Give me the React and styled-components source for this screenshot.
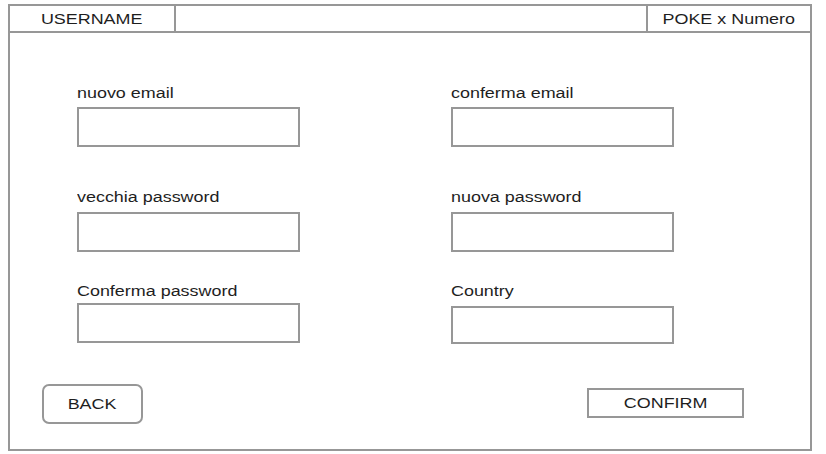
import React from "react";
import styled, { createGlobalStyle } from "styled-components";

const Global = createGlobalStyle`
  html, body { margin: 0; padding: 0; background: #ffffff; }
  body { font-family: "Liberation Sans", Arial, sans-serif; color: #222; }
  * { box-sizing: border-box; }
`;

const LINE = "#979797";

const Frame = styled.div`
  margin: 4px 0 0 8px;
  width: 804px;
  height: 447px;
  border: 2px solid ${LINE};
  display: flex;
  flex-direction: column;
`;

const Header = styled.header`
  height: 27px;
  border-bottom: 2px solid ${LINE};
  display: grid;
  grid-template-columns: 166px 1fr 164px;
`;

const HeaderCell = styled.div`
  display: flex;
  align-items: center;
  justify-content: center;
  padding-top: 1px;
  ${(p) => (p.$right ? `border-left: 2px solid ${LINE};` : "")}
  ${(p) => (p.$left ? `border-right: 2px solid ${LINE};` : "")}
`;

const Text = styled.span`
  display: inline-block;
  font-family: "Liberation Sans", Arial, sans-serif;
  font-size: 14px;
  line-height: 16px;
  color: #1e1e1e;
  white-space: nowrap;
  transform: scaleX(1.28);
  transform-origin: ${(p) => p.$origin || "center"};
`;

const Body = styled.main`
  flex: 1;
  display: flex;
  flex-direction: column;
  padding-left: 67px;
`;

const FormRow = styled.div`
  display: grid;
  grid-template-columns: 223px 223px;
  column-gap: 151px;
  align-items: start;
  margin-top: ${(p) => p.$top}px;
`;

const Field = styled.label`
  display: flex;
  flex-direction: column;
  gap: ${(p) => p.$gap}px;
`;

const Input = styled.input`
  display: block;
  width: 223px;
  height: ${(p) => p.$h || 40}px;
  margin: 0;
  padding: 0 6px;
  border: 2px solid ${LINE};
  border-radius: 0;
  background: #fff;
  font: inherit;
  outline: none;
`;

const Footer = styled.div`
  display: flex;
  justify-content: space-between;
  align-items: center;
  margin: 40px 0 0 -35px;
  padding-right: 66px;
`;

const Button = styled.button`
  display: flex;
  align-items: center;
  justify-content: center;
  width: ${(p) => p.$w}px;
  height: ${(p) => p.$h}px;
  padding: 0;
  border: 2px solid ${LINE};
  border-radius: ${(p) => p.$radius || 0}px;
  background: #fff;
  cursor: pointer;
  font: inherit;
  margin-top: ${(p) => p.$top || 0}px;
`;

const rows = [
  {
    top: 52,
    fields: [
      { label: "nuovo email", gap: 6 },
      { label: "conferma email", gap: 6 },
    ],
  },
  {
    top: 42,
    fields: [
      { label: "vecchia password", gap: 7 },
      { label: "nuova password", gap: 7 },
    ],
  },
  {
    top: 31,
    fields: [
      { label: "Conferma password", gap: 4 },
      { label: "Country", gap: 7, h: 38 },
    ],
  },
];

export default function App() {
  return (
    <>
      <Global />
      <Frame>
        <Header>
          <HeaderCell $left>
            <Text>USERNAME</Text>
          </HeaderCell>
          <HeaderCell />
          <HeaderCell $right>
            <Text>POKE x Numero</Text>
          </HeaderCell>
        </Header>
        <Body>
          {rows.map((row, i) => (
            <FormRow key={i} $top={row.top}>
              {row.fields.map((f) => (
                <Field key={f.label} $gap={f.gap}>
                  <Text $origin="left">{f.label}</Text>
                  <Input readOnly $h={f.h} />
                </Field>
              ))}
            </FormRow>
          ))}
          <Footer>
            <Button $w={101} $h={40} $radius={7}>
              <Text>BACK</Text>
            </Button>
            <Button $w={157} $h={30} $top={-2}>
              <Text>CONFIRM</Text>
            </Button>
          </Footer>
        </Body>
      </Frame>
    </>
  );
}
